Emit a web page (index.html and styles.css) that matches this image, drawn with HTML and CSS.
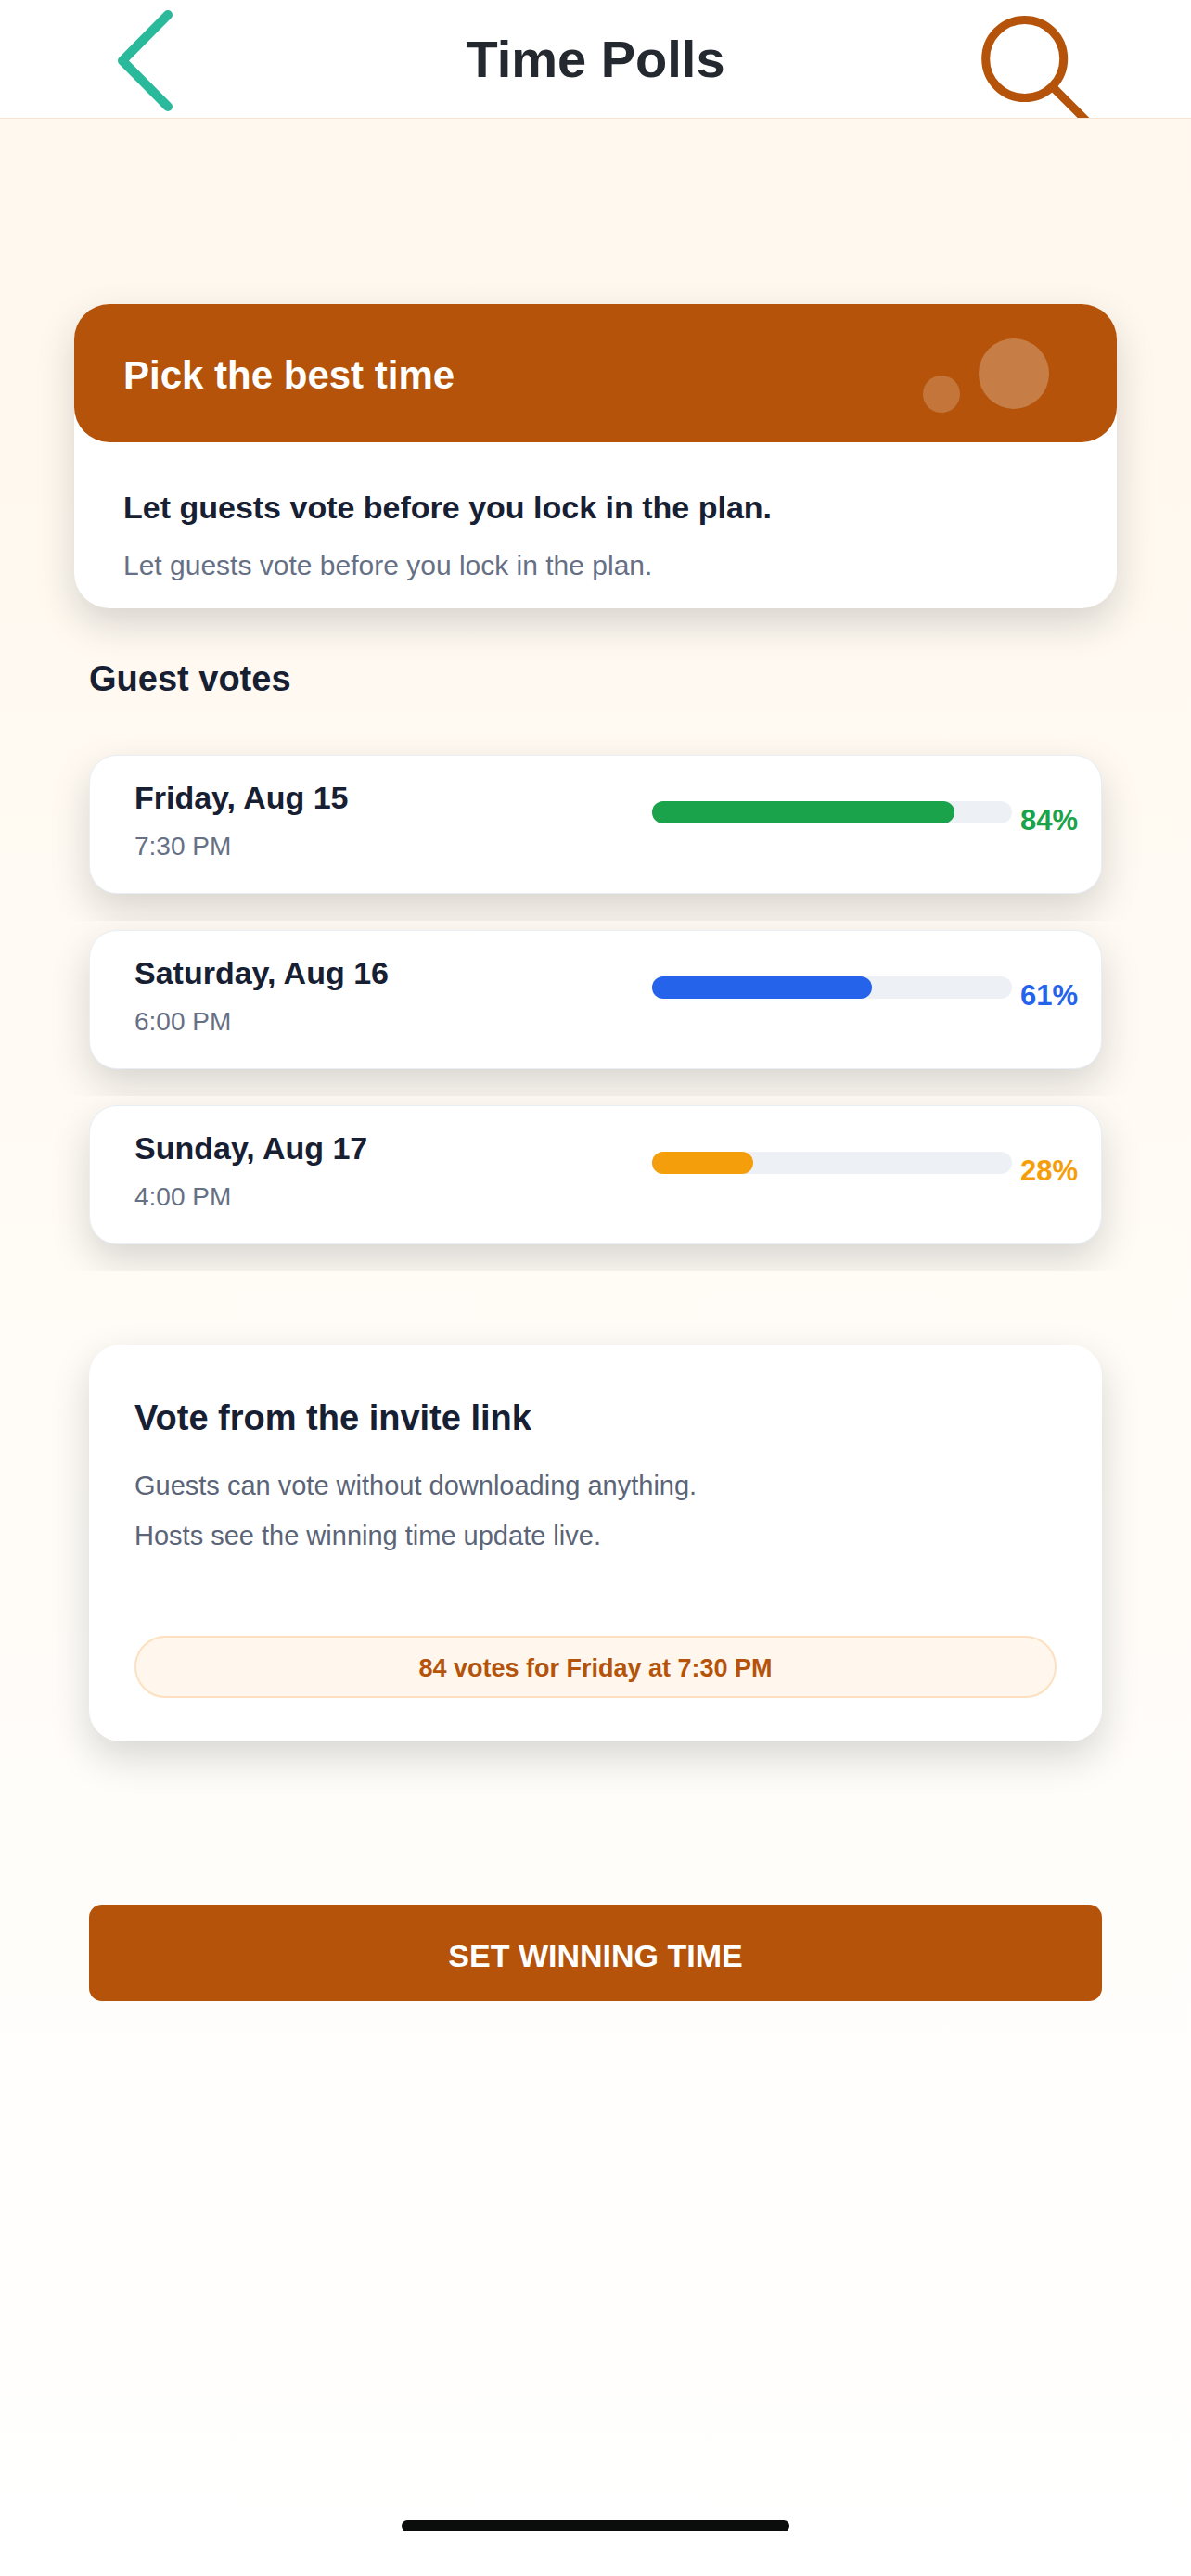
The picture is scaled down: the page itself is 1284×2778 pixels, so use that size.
FILE: index.html
```html
<!DOCTYPE html>
<html lang="en">
<head>
<meta charset="utf-8">
<meta name="viewport" content="width=device-width, initial-scale=1">
<title>Time Polls</title>
<link rel="stylesheet" href="styles.css">
</head>
<body>
<header class="topbar">
  <button class="icon-button" type="button" aria-label="Back">
    <svg class="icon" viewBox="0 0 120 127" aria-hidden="true"><path d="M73 16 24 65.500 73 115" fill="none" stroke="#2ab99b" stroke-width="10" stroke-linecap="round" stroke-linejoin="round"/></svg>
  </button>
  <h1 class="topbar-title">Time Polls</h1>
  <button class="icon-button icon-button-end" type="button" aria-label="Search">
    <svg class="icon" viewBox="0 0 120 127" aria-hidden="true"><g fill="none" stroke="#b45309" stroke-width="9"><circle cx="48.700" cy="63.500" r="42"/><path d="M79 94 120 135"/></g></svg>
  </button>
</header>
<main class="content">
  <section class="hero">
    <div class="hero-banner">
      <h2 class="hero-title">Pick the best time</h2>
      <svg class="hero-dots" viewBox="0 0 136 84" aria-hidden="true"><circle cx="20" cy="64" r="20" fill="#fff" fill-opacity=".2"/><circle cx="98" cy="42" r="38" fill="#fff" fill-opacity=".25"/></svg>
    </div>
    <div class="hero-body">
      <p class="hero-lead">Let guests vote before you lock in the plan.</p>
      <p class="hero-sub">Let guests vote before you lock in the plan.</p>
    </div>
  </section>
  <section class="votes">
    <h2 class="section-title">Guest votes</h2>
    <ul class="vote-list">
      <li class="vote green">
        <div><h3 class="vote-day">Friday, Aug 15</h3><p class="vote-time">7:30 PM</p></div>
        <div class="track"><div class="fill" style="width:84%"></div></div>
        <span class="vote-share">84%</span>
      </li>
      <li class="vote blue">
        <div><h3 class="vote-day">Saturday, Aug 16</h3><p class="vote-time">6:00 PM</p></div>
        <div class="track"><div class="fill" style="width:61%"></div></div>
        <span class="vote-share">61%</span>
      </li>
      <li class="vote amber">
        <div><h3 class="vote-day">Sunday, Aug 17</h3><p class="vote-time">4:00 PM</p></div>
        <div class="track"><div class="fill" style="width:28%"></div></div>
        <span class="vote-share">28%</span>
      </li>
    </ul>
  </section>
  <section class="invite">
    <h2 class="section-title">Vote from the invite link</h2>
    <p class="invite-text">Guests can vote without downloading anything.<br>Hosts see the winning time update live.</p>
    <p class="pill">84 votes for Friday at 7:30 PM</p>
  </section>
  <button class="primary" type="button">SET WINNING TIME</button>
</main>
<div class="home-indicator"></div>
</body>
</html>
```
FILE: styles.css
```css
* { box-sizing: border-box; }

:root {
  --accent: #b45309;
  --ink: #172033;
  --muted: #667085;
  --card-shadow: 0 17px 42px rgba(15, 32, 32, .17);
}

body {
  margin: 0;
  min-height: 100vh;
  display: flex;
  flex-direction: column;
  background: linear-gradient(#fff7ec, #fff);
  color: var(--ink);
  font-family: "Liberation Sans", Arial, sans-serif;
}

h1, h2, h3, p, ul { margin: 0; padding: 0; }
button { font: inherit; border: 0; padding: 0; cursor: pointer; }

.topbar {
  display: grid;
  grid-template-columns: 1fr auto 1fr;
  align-items: center;
  padding: 0 108px;
  background: #fff;
  border-bottom: 1px solid #f6e3d3;
}
.topbar-title { font-size: 56px; line-height: 64px; color: #24282f; }
.icon-button { justify-self: start; background: none; }
.icon-button-end { justify-self: end; }
.icon { display: block; width: 120px; height: 127px; }

.content {
  display: flex;
  flex-direction: column;
  padding: 200px 96px 0;
}

.hero {
  margin: 0 -16px;
  background: #fff;
  border-radius: 38px;
  box-shadow: var(--card-shadow);
}
.hero-banner {
  display: flex;
  align-items: center;
  justify-content: space-between;
  height: 149px;
  padding: 4px 73px 0 53px;
  border-radius: 38px;
  background: var(--accent);
  color: #fff;
}
.hero-title { font-size: 42px; line-height: 48px; }
.hero-dots { width: 136px; height: 84px; margin-bottom: 4px; }
.hero-body {
  display: grid;
  gap: 23px;
  padding: 50px 53px 26px;
}
.hero-lead { font-size: 34px; line-height: 40px; font-weight: 700; }
.hero-sub { font-size: 30px; line-height: 40px; color: var(--muted); }

.votes { margin-top: 54px; }
.section-title { font-size: 38px; line-height: 44px; }
.vote-list {
  display: grid;
  gap: 39px;
  margin-top: 60px;
  list-style: none;
}
.vote {
  display: grid;
  grid-template-columns: 1fr 388px auto;
  column-gap: 9px;
  align-items: start;
  padding: 25px 25px 32px 48px;
  border: 1px solid #e8eef5;
  border-radius: 30px;
  background: #fff;
  box-shadow: var(--card-shadow);
  clip-path: inset(-17px -70px -29px);
}
.vote-day { font-size: 34px; line-height: 40px; }
.vote-time { margin-top: 15px; font-size: 28px; line-height: 36px; color: var(--muted); }
.track {
  height: 24px;
  margin-top: 24px;
  border-radius: 12px;
  background: #edf1f5;
}
.fill { height: 100%; border-radius: 12px; background: currentColor; }
.vote-share { margin-top: 27px; font-size: 31px; line-height: 36px; font-weight: 700; }
.green .fill, .green .vote-share { color: #1aa34a; }
.blue .fill, .blue .vote-share { color: #2563eb; }
.amber .fill, .amber .vote-share { color: #f59e0b; }

.invite {
  margin-top: 108px;
  padding: 57px 49px 47px;
  border-radius: 34px;
  background: #fff;
  box-shadow: var(--card-shadow);
}
.invite-text { margin-top: 24px; font-size: 29px; line-height: 54px; color: #5b6577; }
.pill {
  margin-top: 81px;
  padding: 17px 0 14px;
  border: 2px solid #fde0bf;
  border-radius: 34px;
  background: #fff6ed;
  color: var(--accent);
  font-size: 27px;
  line-height: 32px;
  font-weight: 700;
  text-align: center;
}

.primary {
  margin-top: 176px;
  padding: 35px 0 29px;
  border-radius: 14px;
  background: var(--accent);
  color: #fff;
  font-size: 34px;
  line-height: 40px;
  font-weight: 700;
}

.home-indicator {
  width: 418px;
  max-width: 60%;
  height: 12px;
  margin: auto auto 48px;
  border-radius: 6px;
  background: #0b0c0c;
}
```
